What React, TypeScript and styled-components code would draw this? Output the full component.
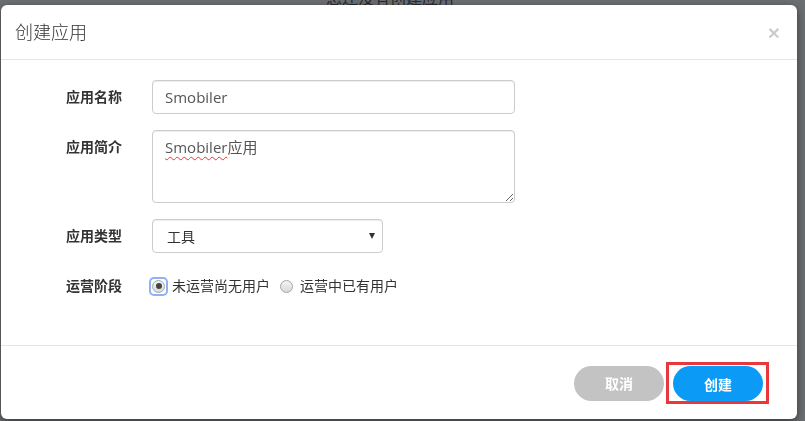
import React from 'react';
import styled, { createGlobalStyle } from 'styled-components';

const GlobalStyle = createGlobalStyle`
  html, body {
    margin: 0;
    padding: 0;
    width: 805px;
    height: 421px;
    overflow: hidden;
    background: #d9dee5;
    font-family: 'Open Sans', 'Noto Sans CJK SC', sans-serif;
    color: #333;
  }
  * { box-sizing: border-box; }
`;

const Page = styled.div`
  width: 805px;
  height: 421px;
  padding-right: 25px;
`;

const EmptyTitle = styled.h2`
  margin: -12px 0 0;
  text-align: center;
  font-size: 16px;
  line-height: 20px;
  font-weight: normal;
  color: #50555c;
`;

const Backdrop = styled.div`
  position: fixed;
  inset: 0;
  background: rgba(0, 0, 0, 0.5);
`;

const Modal = styled.div`
  position: absolute;
  left: 1px;
  top: 5px;
  width: 796px;
  height: 414px;
  background: #fff;
  border-radius: 6px;
  display: flex;
  flex-direction: column;
  box-shadow: 0 3px 9px rgba(0, 0, 0, 0.5);
`;

const Header = styled.div`
  display: flex;
  align-items: center;
  justify-content: space-between;
  padding: 15px 15px 15px 14px;
  border-bottom: 1px solid #e5e5e5;
`;

const Title = styled.h4`
  margin: 0;
  font-size: 18px;
  line-height: 24px;
  font-weight: 300;
  color: #333;
`;

const Close = styled.button`
  border: 0;
  background: none;
  padding: 0;
  margin-right: 2px;
  font-family: 'Liberation Sans', sans-serif;
  font-size: 21px;
  line-height: 21px;
  font-weight: bold;
  color: #000;
  opacity: 0.2;
  cursor: pointer;
`;

const Body = styled.div`
  flex: 1;
  padding: 20px 0 0 65px;
`;

const Row = styled.div`
  display: grid;
  grid-template-columns: 86px auto;
  align-items: start;
  margin-bottom: 16px;
`;

const Label = styled.label`
  padding-top: 7px;
  font-size: 14px;
  line-height: 20px;
  font-weight: bold;
  color: #333;
`;

const TextInput = styled.input<{ $w: number }>`
  width: ${(p) => p.$w}px;
  height: 34px;
  padding: 6px 12px;
  border: 1px solid #ccc;
  border-radius: 4px;
  font-family: 'Open Sans', 'Noto Sans CJK SC', sans-serif;
  font-size: 15px;
  color: #555;
  box-shadow: inset 0 1px 1px rgba(0, 0, 0, 0.075);
  outline: none;
`;

const TextArea = styled.div`
  width: 363px;
  height: 73px;
  padding: 5px 12px;
  border: 1px solid #ccc;
  border-radius: 4px;
  font-size: 15px;
  line-height: 22px;
  color: #555;
  box-shadow: inset 0 1px 1px rgba(0, 0, 0, 0.075);
  overflow: auto;
  resize: both;
`;

const Misspelt = styled.span`
  text-decoration: underline wavy #e33;
  text-decoration-thickness: 1px;
  text-underline-offset: 3px;
`;

const SelectBox = styled.div`
  position: relative;
  width: 231px;
  height: 34px;
`;

const Select = styled.select`
  width: 100%;
  height: 100%;
  appearance: none;
  padding: 0 12px 0 14px;
  border: 1px solid #ccc;
  border-radius: 4px;
  background: #fff;
  font-family: 'Open Sans', 'Noto Sans CJK SC', sans-serif;
  font-size: 14px;
  color: #333;
  box-shadow: inset 0 1px 1px rgba(0, 0, 0, 0.075);
  outline: none;
`;

const Caret = styled.span`
  position: absolute;
  right: 8px;
  top: 14px;
  width: 0;
  height: 0;
  border-left: 3px solid transparent;
  border-right: 3px solid transparent;
  border-top: 6px solid #333;
  pointer-events: none;
`;

const RadioGroup = styled.div`
  display: flex;
  align-items: center;
  height: 34px;
`;

const RadioLabel = styled.label`
  display: flex;
  align-items: center;
  margin-right: 10px;
  font-size: 14px;
  line-height: 20px;
  color: #333;
`;

const FocusRing = styled.span<{ $focus?: boolean }>`
  display: flex;
  padding: 1px;
  margin: 0 6px 0 -1px;
  border-radius: 3px;
  box-shadow: ${(p) => (p.$focus ? '0 0 0 2px #8db3f2' : 'none')};
`;

const RadioDot = styled.span<{ $checked?: boolean }>`
  position: relative;
  width: 13px;
  height: 13px;
  border-radius: 50%;
  border: 1px solid #a6a6a6;
  background: linear-gradient(#f4f4f4, #d8d8d8);
  &::after {
    content: '';
    display: ${(p) => (p.$checked ? 'block' : 'none')};
    position: absolute;
    left: 2.5px;
    top: 2.5px;
    width: 6px;
    height: 6px;
    border-radius: 50%;
    background: #444;
  }
`;

const Footer = styled.div`
  display: flex;
  justify-content: flex-end;
  align-items: center;
  height: 74px;
  padding: 1px 28px 0 0;
  border-top: 1px solid #e5e5e5;
`;

const Pill = styled.button<{ $primary?: boolean }>`
  width: 90px;
  height: 35px;
  border: 0;
  border-radius: 18px;
  background: ${(p) => (p.$primary ? '#0b9bf7' : '#c3c3c3')};
  color: #fff;
  font-family: 'Noto Sans CJK SC', sans-serif;
  font-size: 14px;
  font-weight: 700;
  cursor: pointer;
`;

const Highlight = styled.div`
  margin-left: 2px;
  padding: 1px 3px 0 4px;
  border: 3px solid #e8383c;
  display: flex;
`;

export default function App() {
  return (
    <>
      <GlobalStyle />
      <Page>
        <EmptyTitle>您还没有创建应用</EmptyTitle>
      </Page>
      <Backdrop />
      <Modal>
        <Header>
          <Title>创建应用</Title>
          <Close>×</Close>
        </Header>
        <Body>
          <Row>
            <Label>应用名称</Label>
            <TextInput $w={363} defaultValue="Smobiler" />
          </Row>
          <Row>
            <Label>应用简介</Label>
            <TextArea>
              <Misspelt>Smobiler</Misspelt>应用
            </TextArea>
          </Row>
          <Row>
            <Label>应用类型</Label>
            <SelectBox>
              <Select defaultValue="tool">
                <option value="tool">工具</option>
              </Select>
              <Caret />
            </SelectBox>
          </Row>
          <Row>
            <Label>运营阶段</Label>
            <RadioGroup>
              <RadioLabel>
                <FocusRing $focus>
                  <RadioDot $checked />
                </FocusRing>
                未运营尚无用户
              </RadioLabel>
              <RadioLabel>
                <FocusRing>
                  <RadioDot />
                </FocusRing>
                运营中已有用户
              </RadioLabel>
            </RadioGroup>
          </Row>
        </Body>
        <Footer>
          <Pill>取消</Pill>
          <Highlight>
            <Pill $primary>创建</Pill>
          </Highlight>
        </Footer>
      </Modal>
    </>
  );
}
